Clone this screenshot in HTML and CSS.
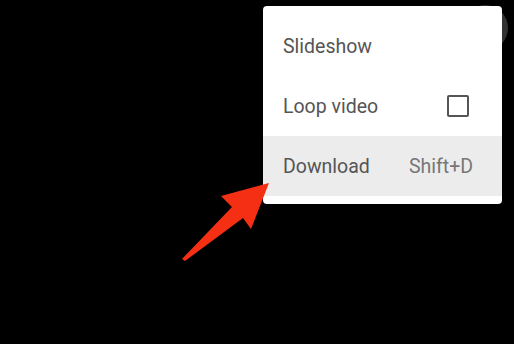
FILE: index.html
```html
<!DOCTYPE html>
<html>
<head>
<meta charset="utf-8">
<link rel="stylesheet" href="styles.css">
</head>
<body>
<div class="stage">
  <div class="bg-button"></div>
  <div class="menu">
    <div class="item"><span class="label">Slideshow</span></div>
    <div class="item"><span class="label">Loop video</span><span class="checkbox"></span></div>
    <div class="item active"><span class="label">Download</span><span class="shortcut">Shift+D</span></div>
  </div>
  <svg class="arrow" width="514" height="344" viewBox="0 0 514 344">
    <polygon points="269,183 221,196 232,207 182,259 185,261 243,218 251,229" fill="#f52f13"/>
  </svg>
</div>
</body>
</html>
```
FILE: styles.css
```css
html, body {
  margin: 0;
  padding: 0;
  background: #000;
  width: 514px;
  height: 344px;
  overflow: hidden;
}
.stage {
  position: relative;
  width: 514px;
  height: 344px;
  padding: 6px 0 0 263px;
  box-sizing: border-box;
  font-family: Roboto, "Liberation Sans", sans-serif;
}
.bg-button {
  position: absolute;
  left: 462px;
  top: 5px;
  width: 46px;
  height: 46px;
  border-radius: 50%;
  background: #333;
}
.menu {
  position: relative;
  width: 239px;
  background: #fff;
  border-radius: 4px;
  padding: 10px 0 8px;
  box-sizing: border-box;
}
.item {
  height: 60px;
  display: flex;
  align-items: center;
  justify-content: space-between;
  padding: 0 30px 0 20px;
}
.item.active {
  background: #ececec;
  padding-right: 29px;
}
.label {
  font-size: 19.5px;
  color: #555;
}
.shortcut {
  font-size: 19.5px;
  color: #777;
}
.checkbox {
  width: 18px;
  height: 18px;
  border: 2.5px solid #555;
  border-radius: 2px;
  margin-right: 3px;
}
.arrow {
  position: absolute;
  left: 0;
  top: 0;
}
```
